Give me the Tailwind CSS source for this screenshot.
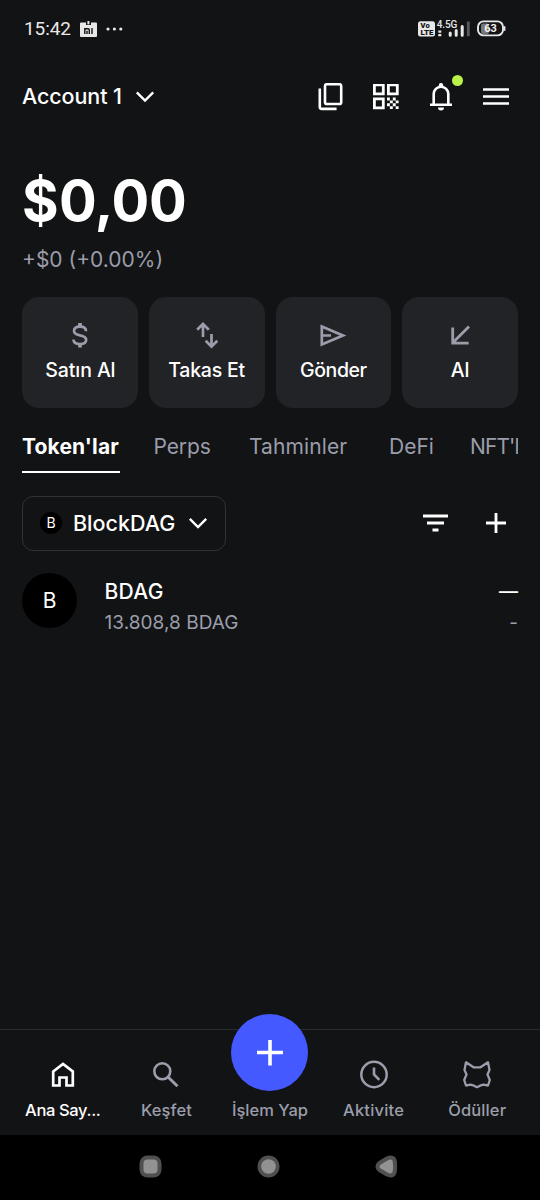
<!DOCTYPE html>
<html lang="tr">
<head>
<meta charset="utf-8">
<title>Cüzdan</title>
<script src="https://cdn.jsdelivr.net/npm/@tailwindcss/browser@4"></script>
</head>
<body class="bg-[#121314]">
<div class="w-[540px] h-[1200px] overflow-hidden flex flex-col bg-[#121314] text-white font-['Inter',sans-serif] whitespace-nowrap">

  <!-- Status bar -->
  <div class="h-[58px] shrink-0 flex items-center pl-6 pr-[34px] font-['Roboto',sans-serif] text-[#e8e8e8]">
    <span class="text-[19px] leading-[58px] w-[56px] tracking-[-0.1px]">15:42</span>
    <svg class="w-[17px] h-[17px]" viewBox="0 0 17 17"><path d="M1 1.500h5v2.500h5V1.500h5a1 1 0 0 1 1 1V15a1 1 0 0 1-1 1H1a1 1 0 0 1-1-1V2.500a1 1 0 0 1 1-1z" fill="#e8e8e8"/><path d="M8.400 0v3.400" stroke="#e8e8e8" stroke-width="2"/><path d="M4.800 13V7.800H8q1.300 0 1.300 1.300V13M7 9.700V13M12 7.100V13" fill="none" stroke="#121314" stroke-width="1.400"/></svg>
    <svg class="w-[17px] h-1 ml-[9px]" viewBox="0 0 17 4"><g fill="#e8e8e8"><circle cx="2" cy="2" r="1.600"/><circle cx="8.400" cy="2" r="1.600"/><circle cx="14.800" cy="2" r="1.600"/></g></svg>
    <svg class="w-[90px] h-[20px] ml-auto" viewBox="0 0 90 20">
      <rect x="2" y="2.300" width="17" height="15.200" rx="2.500" fill="#e8e8e8"/>
      <text x="4.600" y="9.300" font-size="7.500" font-weight="900" fill="#121314">Vo</text>
      <text x="4.400" y="16.300" font-size="7.500" font-weight="900" fill="#121314" textLength="13" lengthAdjust="spacingAndGlyphs">LTE</text>
      <text x="20.800" y="8.700" font-size="10" font-weight="500" fill="#e8e8e8" textLength="20.500">4.5G</text>
      <path d="M22.300 11.500h3v2.200h-3zM22.300 15h3v2.200h-3z" fill="#e8e8e8"/>
      <path d="M34.200 14v2.200M40.200 11.500v4.700M46.200 7.500v8.700" stroke="#e8e8e8" stroke-width="3" stroke-linecap="round"/>
      <path d="M52.300 2.500v14.700" stroke="#58595b" stroke-width="2.800"/>
      <rect x="65" y="4.500" width="8" height="10.500" rx="2" fill="#777879"/>
      <rect x="62" y="2.400" width="25" height="14" rx="5.500" fill="none" stroke="#e8e8e8" stroke-width="1.900"/>
      <path d="M88.600 7.200v4.600" stroke="#e8e8e8" stroke-width="1.600"/>
      <text x="68.300" y="13.400" font-size="11" font-weight="700" fill="#f2f2f2" textLength="12.500">63</text>
    </svg>
  </div>

  <!-- Account header -->
  <header class="h-[77px] shrink-0 flex items-center pl-[22px] pr-[31px]">
    <span class="text-[21.500px] font-medium w-[113px] tracking-[-0.1px]">Account 1</span>
    <svg class="w-[20px] h-[12px]" viewBox="0 0 20 12"><path d="M1.800 1.300 10 9.500l8.200-8.200" fill="none" stroke="#fff" stroke-width="2.400"/></svg>
    <svg class="w-[25px] h-[28px] ml-auto" viewBox="0 0 25 28"><rect x="7" y="1.200" width="16.200" height="19.800" rx="1.800" fill="none" stroke="#fff" stroke-width="2.600"/><path d="M1.800 5.500v18.600a1.800 1.800 0 0 0 1.800 1.800h15" fill="none" stroke="#fff" stroke-width="2.600"/></svg>
    <svg class="w-[26px] h-[26px] ml-[30px]" viewBox="0 .5 26 26"><path d="M1.400 1.400h8.900v8.900H1.400zM15.400 1.400h8.900v8.900h-8.900zM1.400 15.400h8.900v8.900H1.400z" fill="none" stroke="#fff" stroke-width="2.800"/><path d="M14 14h2.900v2.900H14zM19.800 14h2.900v2.900h-2.900zM16.900 16.900h2.900v2.900h-2.900zM22.700 16.900h2.900v2.900h-2.900zM14 19.800h2.900v2.900H14zM19.800 19.800h2.900v2.900h-2.900zM16.900 22.700h2.900v2.900h-2.900zM22.700 22.700h2.900v2.900h-2.900z" fill="#fff"/></svg>
    <div class="relative ml-[30px] w-[24px] h-[28px]">
      <svg class="w-[24px] h-[28px]" viewBox="0 .5 24 28"><path d="M1 22.200h22M4.700 22V11.500a7.300 7.300 0 0 1 14.600 0V22" fill="none" stroke="#fff" stroke-width="2.600"/><path d="M9.800 4.800V2.800a2.200 2.200 0 0 1 4.400 0v2zM9 25h6a3 3 0 0 1-6 0z" fill="#fff"/></svg>
      <span class="absolute left-[22.500px] top-[-8px] size-[11px] rounded-full bg-[#baf24a]"></span>
    </div>
    <svg class="w-[26px] h-[18px] ml-[30px]" viewBox="0 .5 26 18"><path d="M0 2h26M0 9h26M0 16h26" stroke="#fff" stroke-width="2.600"/></svg>
  </header>

  <!-- Balance -->
  <section class="mt-[30px] px-[22px] shrink-0">
    <div class="text-[56px] leading-[72px] font-bold tracking-[-0.3px]"><span class="inline-block w-[37px]">$</span>0,00</div>
    <div class="mt-[8px] text-[21px] leading-[30px] text-[#9b9dab]">+$0 (+0.00%)</div>
  </section>

  <!-- Quick actions -->
  <section class="mt-[22px] mx-[22px] shrink-0 grid grid-cols-4 gap-[11px] text-[19.500px] leading-6 font-medium">
    <div class="h-[110.500px] rounded-[17px] bg-[#222327] flex flex-col items-center pt-6">
      <svg class="w-7 h-[28px]" viewBox="0 0 28 28"><path d="M20 10.200C20 7 17.400 5.700 14 5.700S8 7.200 8 10c0 6.300 12.200 2.300 12.200 8.800 0 2.700-2.600 4.200-6.200 4.200s-6.500-1.500-6.500-4.500" fill="none" stroke="#9b9dab" stroke-width="2.700"/><path d="M14 2v4M14 22.500v4" stroke="#9b9dab" stroke-width="3.800"/></svg>
      <span class="mt-[8.500px] pl-px tracking-[-0.1px]">Satın Al</span>
    </div>
    <div class="h-[110.500px] rounded-[17px] bg-[#222327] flex flex-col items-center pt-6">
      <svg class="w-7 h-[28px]" viewBox="0 0 28 28"><path d="M10 16V3M4.200 8.700 10 2.900l5.800 5.800M18.500 13v12.500M12.700 19.800l5.800 5.800 5.800-5.800" fill="none" stroke="#9b9dab" stroke-width="2.700"/></svg>
      <span class="mt-[8.500px] tracking-[-0.2px]">Takas Et</span>
    </div>
    <div class="h-[110.500px] rounded-[17px] bg-[#222327] flex flex-col items-center pt-6">
      <svg class="w-7 h-[28px]" viewBox="0 0 28 28"><path d="M2.800 5.500 24 14.500 2.800 23.500zM3 14.500h9" fill="none" stroke="#9b9dab" stroke-width="2.700"/></svg>
      <span class="mt-[8.500px] tracking-[-0.4px]">Gönder</span>
    </div>
    <div class="h-[110.500px] rounded-[17px] bg-[#222327] flex flex-col items-center pt-6">
      <svg class="w-7 h-[28px]" viewBox="0 0 28 28"><path d="M23 5.500 7 21.500M6.700 6.500v15.700h16" fill="none" stroke="#9b9dab" stroke-width="2.800"/></svg>
      <span class="mt-[8.500px]">Al</span>
    </div>
  </section>

  <!-- Tabs -->
  <nav class="mt-[17px] mx-[22px] shrink-0 h-[48.500px] flex overflow-hidden text-[21px] leading-[44px] text-[#9b9dab]">
    <span class="w-[98px] mr-[33.500px] shrink-0 text-white font-bold tracking-[0.15px] border-b-[2.500px] border-white">Token'lar</span>
    <span class="w-[95.500px] shrink-0 tracking-[-0.1px]">Perps</span>
    <span class="w-[140px] shrink-0 tracking-[0.1px]">Tahminler</span>
    <span class="w-[82px] shrink-0">DeFi</span>
    <span class="shrink-0 -ml-px tracking-[-0.9px]">NFT'ler</span>
  </nav>

  <!-- Network filter -->
  <div class="mt-[22.500px] pl-[22px] pr-[34px] shrink-0 flex items-center">
    <div class="w-[204px] h-[55px] rounded-[11px] border border-[#303135] flex items-center pl-[17px]">
      <span class="size-[22px] rounded-full bg-black text-[14px] leading-[22px] text-center">B</span>
      <span class="ml-[11px] w-[115px] text-[21.500px] leading-7 font-medium">BlockDAG</span>
      <svg class="w-[20px] h-[12px]" viewBox="0 0 20 12"><path d="M1.800 1.800 10 10l8.200-8.200" fill="none" stroke="#fff" stroke-width="2.400"/></svg>
    </div>
    <svg class="w-[26px] h-[18px] ml-auto" viewBox="0 0 26 18"><path d="M0 2h25M4 9h17M9.500 16h6" stroke="#fff" stroke-width="2.800"/></svg>
    <svg class="w-5 h-5 ml-[37px]" viewBox="0 0 20 20"><path d="M0 10h20M10 0v20" stroke="#fff" stroke-width="2.800"/></svg>
  </div>

  <!-- Token row -->
  <div class="mt-[22.500px] px-[22px] shrink-0 flex">
    <span class="size-[55px] rounded-full bg-black text-[21px] leading-[56px] text-center">B</span>
    <div class="ml-[27.500px] mt-[3px] flex flex-col">
      <span class="text-[21px] leading-[31px] font-medium tracking-[0.3px]">BDAG</span>
      <span class="text-[19px] leading-[31px] text-[#9b9dab] tracking-[0.05px]">13.808,8 BDAG</span>
    </div>
    <div class="ml-auto mt-[3px] flex flex-col items-end">
      <span class="text-[19px] leading-[31px] font-medium">—</span>
      <span class="text-[19px] leading-[31px] text-[#9b9dab]">-</span>
    </div>
  </div>

  <!-- Bottom navigation -->
  <nav class="mt-auto shrink-0 h-[106px] border-t border-[#2b2c2f] px-[11px] grid grid-cols-5 text-[16.500px] leading-6 font-medium text-[#9b9dab]">
    <div class="flex flex-col items-center pt-[30px] text-white">
      <svg class="w-[30px] h-[30px]" viewBox="0 0 30 30"><path d="M5.200 11.500 15 4l9.800 7.500v14h-6.300v-8h-7v8H5.200z" fill="none" stroke="#fff" stroke-width="2.700"/></svg>
      <span class="mt-[8px] tracking-[-0.35px]">Ana Say...</span>
    </div>
    <div class="flex flex-col items-center pt-[30px]">
      <svg class="w-[30px] h-[30px]" viewBox="0 0 30 30"><circle cx="11.300" cy="11.300" r="8" fill="none" stroke="#9b9dab" stroke-width="2.600"/><path d="m17 17 9.500 9.300" stroke="#9b9dab" stroke-width="3"/></svg>
      <span class="mt-[8px] tracking-[0.1px]">Keşfet</span>
    </div>
    <div class="relative flex flex-col items-center pt-[68px]">
      <div class="absolute top-[-16px] size-[77px] rounded-full bg-[#4459ff] flex items-center justify-center">
        <svg class="w-[26px] h-[26px]" viewBox="0 0 26 26"><path d="M0 12.500h26M13 -.5v26" stroke="#fff" stroke-width="3.600"/></svg>
      </div>
      <span>İşlem Yap</span>
    </div>
    <div class="flex flex-col items-center pt-[30px]">
      <svg class="w-[30px] h-[30px]" viewBox="0 0 30 30"><circle cx="15" cy="14.500" r="12.700" fill="none" stroke="#9b9dab" stroke-width="2.500"/><path d="M15 7.500v7l5.300 5.300" fill="none" stroke="#9b9dab" stroke-width="2.600"/></svg>
      <span class="mt-[8px] tracking-[0.2px]">Aktivite</span>
    </div>
    <div class="flex flex-col items-center pt-[30px]">
      <svg class="w-[30px] h-[30px]" viewBox="0 0 30 30"><path d="M4 2.300 11.500 7.300h7L26 2.300l1.500 7.700L25.500 14.500l2.300 5.500-1.800 5.500-4.500-.8-3.500 1L15 27.200l-3-1.500-3.500-1-4.500.8L2.200 20l2.300-5.500L2.500 10z" fill="none" stroke="#9b9dab" stroke-width="2.300" stroke-linejoin="round"/></svg>
      <span class="mt-[8px] tracking-[0.1px]">Ödüller</span>
    </div>
  </nav>

  <!-- System navigation -->
  <div class="h-[65px] shrink-0 bg-black flex justify-between items-center pl-[139px] pr-[142px] pb-[3px]">
    <svg class="w-[23px] h-[23px]" viewBox="0 0 23 23"><rect x=".5" y=".5" width="22" height="22" rx="8" fill="#505050"/><rect x="4.500" y="4.500" width="14" height="14" rx="4" fill="#929292"/></svg>
    <svg class="w-[23px] h-[23px]" viewBox="0 0 23 23"><circle cx="11.500" cy="11.500" r="11" fill="#505050"/><circle cx="11.500" cy="11.500" r="7.300" fill="#929292"/></svg>
    <svg class="w-[23px] h-[23px]" viewBox="0 0 23 23"><path d="M5.500 9.700 12.500 5.500Q17.500 3 17.800 7q.6 4.500 0 9-.3 4-5.300 1.500L5.500 13.300q-2-1.800 0-3.600z" fill="#929292" stroke="#505050" stroke-width="8" stroke-linejoin="round" paint-order="stroke"/></svg>
  </div>
</div>
</body>
</html>
